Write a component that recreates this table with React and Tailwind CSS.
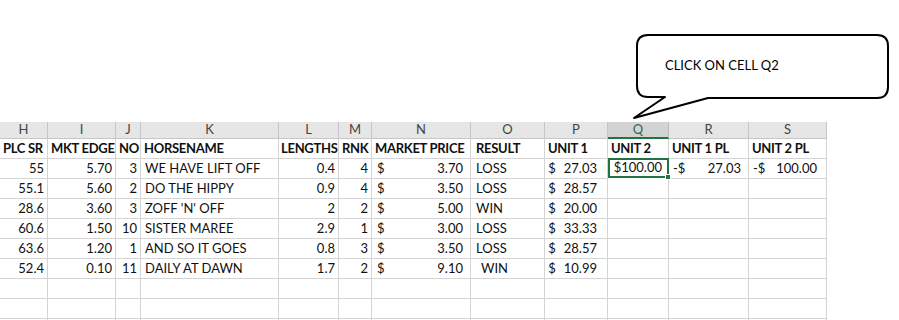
import React from "react";

const COLS = "grid grid-cols-[48px_68px_25px_138px_60px_33px_99px_74px_63px_61px_80px_78px]";
const LETTERS = ["H", "I", "J", "K", "L", "M", "N", "O", "P", "Q", "R", "S"];
const HEADINGS = [
  "PLC SR", "MKT EDGE", "NO", "HORSENAME", "LENGTHS", "RNK",
  "MARKET PRICE", "RESULT", "UNIT 1", "UNIT 2", "UNIT 1 PL", "UNIT 2 PL",
];

const rows = [
  ["55", "5.70", "3", "WE HAVE LIFT OFF", "0.4", "4", "3.70", "LOSS", "27.03"],
  ["55.1", "5.60", "2", "DO THE HIPPY", "0.9", "4", "3.50", "LOSS", "28.57"],
  ["28.6", "3.60", "3", "ZOFF 'N' OFF", "2", "2", "5.00", "WIN", "20.00"],
  ["60.6", "1.50", "10", "SISTER MAREE", "2.9", "1", "3.00", "LOSS", "33.33"],
  ["63.6", "1.20", "1", "AND SO IT GOES", "0.8", "3", "3.50", "LOSS", "28.57"],
  ["52.4", "0.10", "11", "DAILY AT DAWN", "1.7", "2", "9.10", " WIN", "10.99"],
];

const cell = "h-[20px] border-r border-b border-[#d4d4d4] flex items-center whitespace-nowrap";

function Callout() {
  return (
    <>
      <svg className="absolute left-0 top-0" width="899" height="130" viewBox="0 0 899 130">
        <path
          d="M648 35 H877 Q888 35 888 46 V87 Q888 98 877 98 H708 L634 118 L665 97 H648 Q637 97 637 86 V46 Q637 35 648 35 Z"
          fill="#fff"
          stroke="#000"
          strokeWidth="2"
          strokeLinejoin="round"
        />
      </svg>
      <div className="absolute left-[665px] top-[56px] text-[13px] text-black">CLICK ON CELL Q2</div>
    </>
  );
}

export default function App() {
  return (
    <div className="relative h-[320px] w-[899px] overflow-hidden bg-white font-['Lato',sans-serif] text-[13px] text-[#111]">
      <Callout />

      <div className="pt-[122px] w-[827px]">
        {/* COLUMN LETTERS */}
        <div className={COLS}>
          {LETTERS.map((l) => (
            <div
              key={l}
              className={
                l === "Q"
                  ? "h-[17px] flex items-center justify-center bg-[#d3d3d3] text-[#2f6b47] border-r border-[#bdbdbd] border-b-2 border-b-[#217346]"
                  : "h-[17px] flex items-center justify-center bg-[#e6e6e6] text-[#444] border-r border-b border-[#c6c6c6]"
              }
            >
              {l}
            </div>
          ))}
        </div>

        {/* HEADINGS */}
        <div className={COLS}>
          {HEADINGS.map((h, i) => (
            <div
              key={h}
              className={`${cell} font-bold tracking-[-0.3px] ${i === 7 ? "pl-[5px]" : i === 4 ? "pl-[2px]" : "pl-[3px]"}`}
            >
              {h}
            </div>
          ))}
        </div>

        {/* DATA */}
        {rows.map((r, i) => (
          <div key={i} className={COLS}>
            <div className={`${cell} justify-end pr-[3px]`}>{r[0]}</div>
            <div className={`${cell} justify-end pr-[3px]`}>{r[1]}</div>
            <div className={`${cell} justify-end pr-[3px]`}>{r[2]}</div>
            <div className={`${cell} pl-[4px]`}>{r[3]}</div>
            <div className={`${cell} justify-end pr-[3px]`}>{r[4]}</div>
            <div className={`${cell} justify-end pr-[3px]`}>{r[5]}</div>
            <div className={`${cell} justify-between pl-[5px] pr-[7px]`}>
              <span>$</span>
              <span>{r[6]}</span>
            </div>
            <div className={`${cell} ${r[7].startsWith(" ") ? "pl-[10px]" : "pl-[5px]"}`}>{r[7].trim()}</div>
            <div className={`${cell} justify-end pr-[10px]`}>
              <span className="mr-[8px]">$</span>
              <span>{r[8]}</span>
            </div>
            {i === 0 ? (
              <>
                <div className="relative h-[20px] border-2 border-[#217346] flex items-center justify-end pr-[5px] -mt-px">
                  $100.00
                  <span className="absolute -right-[4px] -bottom-[4px] w-[6px] h-[6px] bg-[#217346] border border-white" />
                </div>
                <div className={`${cell} justify-between pl-[4px] pr-[7px]`}>
                  <span>-$</span>
                  <span>27.03</span>
                </div>
                <div className={`${cell} justify-between pl-[4px] pr-[9px]`}>
                  <span>-$</span>
                  <span>100.00</span>
                </div>
              </>
            ) : (
              <>
                <div className={cell} />
                <div className={cell} />
                <div className={cell} />
              </>
            )}
          </div>
        ))}

        {/* EMPTY ROWS */}
        {[0, 1].map((k) => (
          <div key={k} className={COLS}>
            {LETTERS.map((l) => (
              <div key={l} className={cell} />
            ))}
          </div>
        ))}
        <div className={COLS}>
          {LETTERS.map((l) => (
            <div key={l} className="h-[24px] border-r border-[#d4d4d4]" />
          ))}
        </div>
      </div>
    </div>
  );
}
